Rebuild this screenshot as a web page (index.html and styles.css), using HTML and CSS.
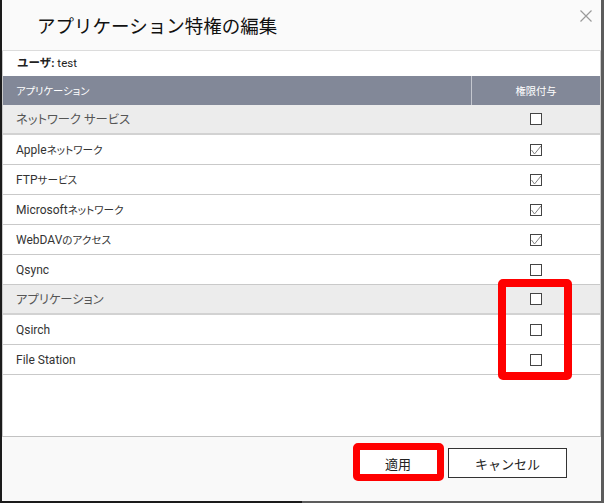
FILE: index.html
```html
<!DOCTYPE html>
<html lang="ja">
<head>
<meta charset="utf-8">
<title>アプリケーション特権の編集</title>
<link rel="stylesheet" href="styles.css">
</head>
<body>
<div class="frame">
  <div class="dialog">
    <div class="titlebar">
      <h1 class="title">アプリケーション特権の編集</h1>
      <span class="close"><svg width="12" height="12" viewBox="0 0 12 12"><path d="M0.5 0.5 L11.5 11.5 M11.5 0.5 L0.5 11.5" stroke="#9a9a9a" stroke-width="1.2" fill="none"/></svg></span>
    </div>
    <div class="main">
      <div class="user"><b>ユーザ:</b> test</div>
      <div class="grid">
        <div class="row head"><div class="col-app">アプリケーション</div><div class="col-grant">権限付与</div></div>
        <div class="row group"><div class="col-app">ネットワーク サービス</div><div class="col-grant"><span class="cb"></span></div></div>
        <div class="row"><div class="col-app">Apple<span class="ja">ネットワーク</span></div><div class="col-grant"><span class="cb on"><svg width="12" height="12" viewBox="0 0 12 12"><path d="M1.5 6 L4.5 10 L11 2" stroke="#808080" stroke-width="1" fill="none"/></svg></span></div></div>
        <div class="row"><div class="col-app">FTP<span class="ja">サービス</span></div><div class="col-grant"><span class="cb on"><svg width="12" height="12" viewBox="0 0 12 12"><path d="M1.5 6 L4.5 10 L11 2" stroke="#808080" stroke-width="1" fill="none"/></svg></span></div></div>
        <div class="row"><div class="col-app">Microsoft<span class="ja">ネットワーク</span></div><div class="col-grant"><span class="cb on"><svg width="12" height="12" viewBox="0 0 12 12"><path d="M1.5 6 L4.5 10 L11 2" stroke="#808080" stroke-width="1" fill="none"/></svg></span></div></div>
        <div class="row"><div class="col-app">WebDAV<span class="ja">のアクセス</span></div><div class="col-grant"><span class="cb on"><svg width="12" height="12" viewBox="0 0 12 12"><path d="M1.5 6 L4.5 10 L11 2" stroke="#808080" stroke-width="1" fill="none"/></svg></span></div></div>
        <div class="row"><div class="col-app">Qsync</div><div class="col-grant"><span class="cb"></span></div></div>
        <div class="row group"><div class="col-app">アプリケーション</div><div class="col-grant"><span class="cb"></span></div></div>
        <div class="row"><div class="col-app">Qsirch</div><div class="col-grant"><span class="cb"></span></div></div>
        <div class="row"><div class="col-app">File Station</div><div class="col-grant"><span class="cb"></span></div></div>
      </div>
    </div>
    <div class="footer">
      <button class="btn btn-apply">適用</button>
      <button class="btn btn-cancel">キャンセル</button>
    </div>
  </div>
  <div class="mark mark-cb"></div>
  <div class="mark mark-apply"></div>
</div>
</body>
</html>
```
FILE: styles.css
```css
html, body {
  margin: 0;
  padding: 0;
}
body {
  width: 604px;
  height: 503px;
  overflow: hidden;
  background: linear-gradient(to right, #1b1b1b 0, #1b1b1b 50%, #5c5c5c 50%, #5c5c5c 100%);
  font-family: Roboto, "Noto Sans CJK JP", sans-serif;
}
.frame {
  position: relative;
  width: 604px;
  height: 503px;
}
.dialog {
  margin-left: 2px;
  width: 599px;
  height: 501px;
  display: flex;
  flex-direction: column;
  background: #fafafa;
}
.titlebar {
  height: 50px;
  border-bottom: 1px solid #dcdcdc;
  display: flex;
  justify-content: space-between;
  align-items: flex-start;
  background: #fafafa;
}
.title {
  margin: 0;
  padding: 12px 0 0 35px;
  font-family: "Noto Sans CJK JP", sans-serif;
  font-weight: 400;
  font-size: 18.5px;
  line-height: 26px;
  color: #111;
}
.close {
  display: block;
  width: 12px;
  height: 12px;
  margin: 10px 9px 0 0;
}
.close svg { display: block; }
.main {
  height: 385px;
  background: #fff;
  border-left: 1px solid #cacaca;
  border-right: 1px solid #cacaca;
  border-bottom: 1px solid #c2c2c2;
}
.user {
  height: 25px;
  line-height: 24px;
  padding-left: 14px;
  font-size: 11.5px;
  color: #222;
}
.user b { font-weight: 700; }
.grid {
  display: flex;
  flex-direction: column;
}
.row {
  display: flex;
  align-items: center;
  height: 30px;
  box-sizing: border-box;
  border-bottom: 1px solid #c9c9c9;
  font-size: 12px;
  color: #333;
  font-feature-settings: "palt";
}
.ja {
  font-size: 10.6px;
}
.row.head {
  height: 29px;
  border-bottom: none;
  background: #828898;
  color: #fff;
  font-size: 10.3px;
  align-items: stretch;
}
.row.group {
  background: #ececec;
  border-bottom: 2px solid #d2d2d2;
  color: #555;
  font-size: 12.3px;
}
.col-app {
  flex: 1;
  padding-left: 13px;
  display: flex;
  align-items: center;
}
.col-grant {
  width: 128px;
  display: flex;
  align-items: center;
  justify-content: center;
  height: 100%;
}
.head .col-grant {
  border-left: 1px solid #c4c7cf;
}
.cb {
  display: block;
  width: 12px;
  height: 12px;
  box-sizing: border-box;
  border: 1px solid #444;
  background: #fff;
  position: relative;
}
.cb svg {
  position: absolute;
  left: -1px;
  top: -1px;
}
.footer {
  flex: 1;
  display: flex;
  justify-content: flex-end;
  align-items: flex-start;
  gap: 7px;
  padding: 11px 34px 0 0;
  background: #f9f9f9;
}
.btn {
  height: 30px;
  margin: 0;
  padding: 0;
  background: #fff;
  border: 1px solid #333;
  border-radius: 0;
  font-family: "Noto Sans CJK JP", sans-serif;
  font-size: 13px;
  color: #222;
}
.btn-apply { width: 86px; }
.btn-cancel { width: 119px; }
.mark {
  position: absolute;
  box-sizing: border-box;
  border-style: solid;
  border-color: #ff0000;
  border-radius: 5px;
}
.mark-cb {
  left: 498px;
  top: 279px;
  width: 74px;
  height: 101px;
  border-width: 8px;
}
.mark-apply {
  left: 353px;
  top: 443px;
  width: 91px;
  height: 38px;
  border-width: 7px;
}
```
